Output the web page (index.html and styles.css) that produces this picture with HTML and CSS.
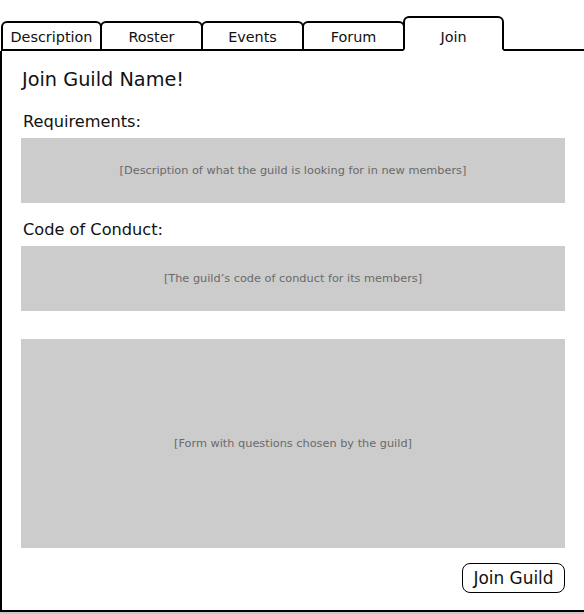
FILE: index.html
```html
<!DOCTYPE html>
<html>
<head>
<meta charset="utf-8">
<link rel="stylesheet" href="styles.css">
</head>
<body>
<div class="page">
  <div class="tabs">
    <div class="tab tab-first">Description</div>
    <div class="tab tab-mid">Roster</div>
    <div class="tab tab-mid">Events</div>
    <div class="tab tab-mid">Forum</div>
    <div class="tab tab-active">Join</div>
    <div class="tab-fill"></div>
  </div>
  <div class="panel">
    <h1 class="title">Join Guild Name!</h1>
    <h2 class="label">Requirements:</h2>
    <div class="box box-short">[Description of what the guild is looking for in new members]</div>
    <h2 class="label label-gap">Code of Conduct:</h2>
    <div class="box box-short">[The guild’s code of conduct for its members]</div>
    <div class="box box-tall">[Form with questions chosen by the guild]</div>
    <div class="actions"><button class="btn">Join Guild</button></div>
  </div>
</div>
</body>
</html>
```

FILE: styles.css
```css
* { box-sizing: border-box; }
html, body { margin: 0; padding: 0; }
body {
  background: #c9c9c9;
  overflow: hidden;
  font-family: "DejaVu Sans", sans-serif;
  color: #111;
}
.page {
  width: 584px;
  background: #fff;
}
.tabs {
  display: flex;
  align-items: flex-end;
  padding: 16px 0 0 1px;
}
.tab {
  border: 2px solid #000;
  border-radius: 6px 6px 0 0;
  text-align: center;
  font-size: 14.4px;
  line-height: 26px;
  padding-top: 1px;
  height: 30px;
}
.tab-first { width: 101px; }
.tab-mid { width: 103px; margin-left: -2px; }
.tab-active {
  width: 101px;
  margin-left: -2px;
  height: 35px;
  padding-top: 6px;
  border-bottom-color: transparent;
  background: #fff;
}
.tab-fill {
  flex: 1;
  border-bottom: 2px solid #000;
}
.panel {
  border-left: 2px solid #000;
  border-bottom: 2px solid #000;
  padding: 17px 19px 17px 19px;
}
.title {
  margin: 0 0 20px 1px;
  font-weight: normal;
  font-size: 19.3px;
  line-height: 24px;
}
.label {
  margin: 0 0 6px 2px;
  font-weight: normal;
  font-size: 16.2px;
  line-height: 20px;
}
.label-gap { margin-top: 17px; }
.box {
  background: #cccccc;
  color: #6a6a6a;
  font-size: 11.3px;
  display: flex;
  align-items: center;
  justify-content: center;
}
.box-short { height: 65px; }
.box-tall { height: 209px; margin-top: 28px; }
.actions {
  display: flex;
  justify-content: flex-end;
  margin-top: 15px;
}
.btn {
  font-family: "DejaVu Sans", sans-serif;
  font-size: 16.9px;
  color: #111;
  background: #fff;
  border: 1.5px solid #000;
  border-radius: 8px;
  height: 30px;
  width: 103px;
  padding: 0;
}
```
